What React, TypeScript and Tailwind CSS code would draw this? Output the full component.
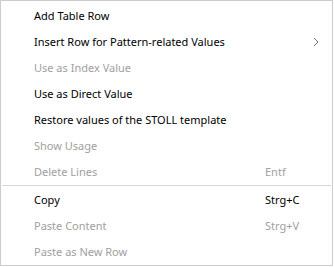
type Item = {
    label: string;
    shortcut?: string;
    disabled?: boolean;
    submenu?: boolean;
};

const topItems: Item[] = [
    { label: "Add Table Row" },
    { label: "Insert Row for Pattern-related Values", submenu: true },
    { label: "Use as Index Value", disabled: true },
    { label: "Use as Direct Value" },
    { label: "Restore values of the STOLL template" },
    { label: "Show Usage", disabled: true },
    { label: "Delete Lines", shortcut: "Entf", disabled: true },
];

const bottomItems: Item[] = [
    { label: "Copy", shortcut: "Strg+C" },
    { label: "Paste Content", shortcut: "Strg+V", disabled: true },
    { label: "Paste as New Row", disabled: true },
];

function MenuRow({ item }: { item: Item }) {
    const color = item.disabled ? "text-[#a0a0a0]" : "text-black";
    return (
        <div className={`flex items-center h-[26px] pb-[2px] pl-[33px] pr-[13px] ${color}`}>
            <span className="flex-1 whitespace-nowrap">{item.label}</span>
            {item.shortcut && <span className="w-[54px] whitespace-nowrap">{item.shortcut}</span>}
            {item.submenu && (
                <svg width="6" height="10" viewBox="0 0 6 10" className="mt-[1px]">
                    <path d="M1 1 L5 5 L1 9" fill="none" stroke="#707070" strokeWidth="1" />
                </svg>
            )}
        </div>
    );
}

export default function App() {
    return (
        <div className="w-[334px] h-[267px] bg-white" style={{ fontFamily: '"Segoe UI", "Noto Sans", sans-serif' }}>
            <div className="w-[333px] h-[266px] border border-[#cccccc] bg-white pt-[2px] text-[11px] leading-none">
                {topItems.map((item) => (
                    <MenuRow key={item.label} item={item} />
                ))}
                <div className="h-[2px] mx-[1px] border-t border-[#d7d7d7]" />
                {bottomItems.map((item) => (
                    <MenuRow key={item.label} item={item} />
                ))}
            </div>
        </div>
    );
}
